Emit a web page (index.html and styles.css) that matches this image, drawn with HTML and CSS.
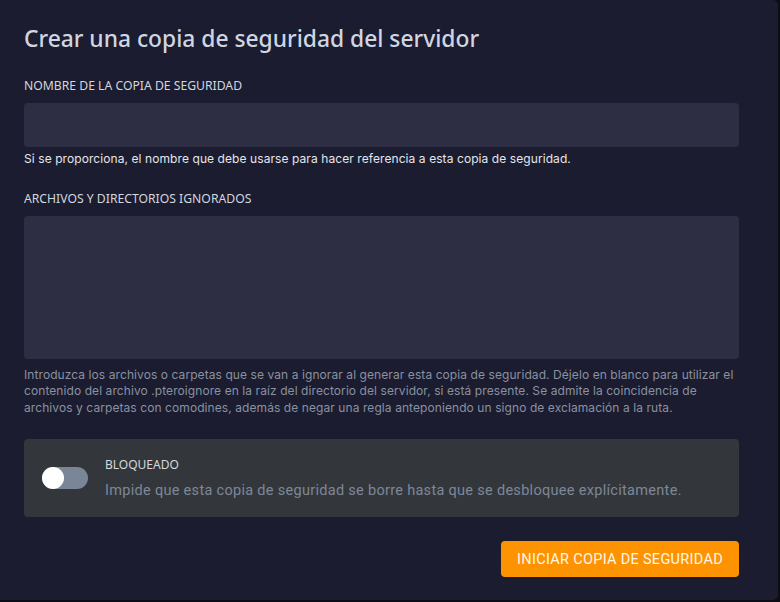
FILE: index.html
```html
<!DOCTYPE html>
<html lang="es">
<head>
<meta charset="utf-8">
<link rel="stylesheet" href="styles.css">
</head>
<body>
<div class="modal">
  <h2 class="title">Crear una copia de seguridad del servidor</h2>
  <div class="field">
    <label class="label">NOMBRE DE LA COPIA DE SEGURIDAD</label>
    <div class="input"></div>
    <p class="help help-light">Si se proporciona, el nombre que debe usarse para hacer referencia a esta copia de seguridad.</p>
  </div>
  <div class="field field-2">
    <label class="label">ARCHIVOS Y DIRECTORIOS IGNORADOS</label>
    <div class="textarea"></div>
    <p class="help help-gray">Introduzca los archivos o carpetas que se van a ignorar al generar esta copia de seguridad. Déjelo en blanco para utilizar el contenido del archivo .pteroignore en la raíz del directorio del servidor, si está presente. Se admite la coincidencia de archivos y carpetas con comodines, además de negar una regla anteponiendo un signo de exclamación a la ruta.</p>
  </div>
  <div class="lockbox">
    <div class="toggle"><span class="knob"></span></div>
    <div class="locktext">
      <div class="locklabel">BLOQUEADO</div>
      <div class="lockdesc">Impide que esta copia de seguridad se borre hasta que se desbloquee explícitamente.</div>
    </div>
  </div>
  <div class="actions">
    <button class="btn">INICIAR COPIA DE SEGURIDAD</button>
  </div>
</div>
</body>
</html>
```

FILE: styles.css
```css
html, body {
  margin: 0;
  padding: 0;
  background: #0d0d14;
}
body {
  width: 780px;
  height: 602px;
  overflow: hidden;
}
.modal {
  box-sizing: border-box;
  width: 778px;
  height: 600px;
  background: #1b1c2f;
  border-radius: 0 5px 5px 0;
  padding: 24px 39px 0 24px;
  font-family: Inter, Roboto, "Liberation Sans", sans-serif;
}
.title {
  margin: 0;
  font-family: "Noto Sans", "Open Sans", sans-serif;
  font-weight: 500;
  font-size: 22.8px;
  line-height: 30px;
  color: #cfd6e2;
}
.field {
  margin-top: 24px;
}
.field-2 {
  margin-top: 23px;
}
.label {
  display: block;
  font-family: "Noto Sans", sans-serif;
  font-size: 12.2px;
  line-height: 16px;
  color: #d3d7df;
  margin-bottom: 9px;
}
.input {
  height: 44px;
  background: #2d2e43;
  border-radius: 4px;
}
.textarea {
  height: 143px;
  background: #2d2e43;
  border-radius: 4px;
}
.help {
  margin: 4px 0 0;
  font-size: 12px;
  line-height: 16.5px;
  letter-spacing: 0.08px;
}
.help-light {
  color: #e3e6ec;
  margin-top: 4px;
}
.help-gray {
  color: #8a91a0;
  margin-top: 8px;
}
.lockbox {
  margin-top: 23px;
  height: 78px;
  box-sizing: border-box;
  background: #33373c;
  border-radius: 4px;
  display: flex;
  align-items: center;
  padding: 0 18px;
  gap: 17px;
}
.toggle {
  width: 46px;
  height: 22px;
  border-radius: 11px;
  background: #7a8597;
  position: relative;
  flex: none;
}
.knob {
  position: absolute;
  left: 0;
  top: 0;
  width: 22px;
  height: 22px;
  border-radius: 50%;
  background: #fff;
}
.locklabel {
  font-family: "Noto Sans", sans-serif;
  font-size: 12px;
  line-height: 16px;
  color: #d5d8de;
  font-weight: 400;
}
.lockdesc {
  margin-top: 9px;
  font-family: Roboto, sans-serif;
  font-size: 14.5px;
  line-height: 18px;
  color: #7e8797;
  letter-spacing: 0.3px;
}
.actions {
  display: flex;
  justify-content: flex-end;
  margin-top: 24px;
}
.btn {
  height: 36px;
  padding: 0 16px;
  border: 0;
  border-radius: 4px;
  background: #fd9300;
  color: #fff6ea;
  font-family: Roboto, sans-serif;
  font-size: 14.5px;
  letter-spacing: 0.3px;
}
```
